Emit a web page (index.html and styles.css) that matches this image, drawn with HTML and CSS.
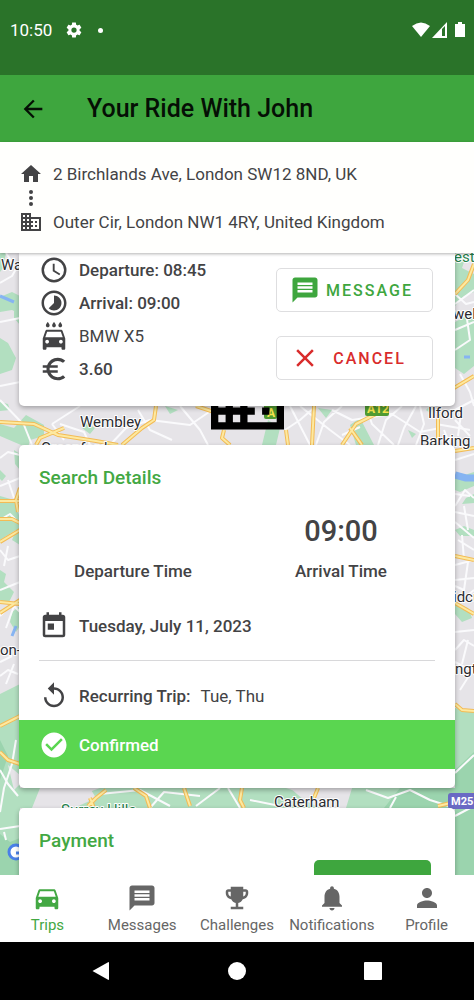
FILE: index.html
```html
<!DOCTYPE html>
<html lang="en">
<head>
    <meta charset="UTF-8">
    <meta name="viewport" content="width=device-width, initial-scale=1.0">
    <title>Your Ride With John</title>
    <link rel="stylesheet" href="styles.css">
</head>
<body>
    <div class="status">
        <span>10:50</span>
        <svg class="status-gear" viewBox="0 0 24 24"><path d="M12,15.5A3.5,3.5 0 0,1 8.5,12A3.5,3.5 0 0,1 12,8.5A3.5,3.5 0 0,1 15.5,12A3.5,3.5 0 0,1 12,15.5M19.43,12.97C19.47,12.65 19.5,12.33 19.5,12C19.5,11.67 19.47,11.34 19.43,11L21.54,9.37C21.73,9.22 21.78,8.95 21.66,8.73L19.66,5.27C19.54,5.05 19.27,4.96 19.05,5.05L16.56,6.05C16.04,5.66 15.5,5.32 14.87,5.07L14.5,2.42C14.46,2.18 14.25,2 14,2H10C9.75,2 9.54,2.18 9.5,2.42L9.13,5.07C8.5,5.32 7.96,5.66 7.44,6.05L4.95,5.05C4.73,4.96 4.46,5.05 4.34,5.27L2.34,8.73C2.21,8.95 2.27,9.22 2.46,9.37L4.57,11C4.53,11.34 4.5,11.67 4.5,12C4.5,12.33 4.53,12.65 4.57,12.97L2.46,14.63C2.27,14.78 2.21,15.05 2.34,15.27L4.34,18.73C4.46,18.95 4.73,19.03 4.95,18.95L7.44,17.94C7.96,18.34 8.5,18.68 9.13,18.93L9.5,21.58C9.54,21.82 9.75,22 10,22H14C14.25,22 14.46,21.82 14.5,21.58L14.87,18.93C15.5,18.67 16.04,18.34 16.56,17.94L19.05,18.95C19.27,19.03 19.54,18.95 19.66,18.73L21.66,15.27C21.78,15.05 21.73,14.78 21.54,14.63L19.43,12.97Z"/></svg>
        <i class="status-dot"></i>
        <svg class="status-signal" viewBox="0 0 54 16">
            <path d="M0 4Q9 -3 18 4L9 15Z"/>
            <path d="M20 16L35 0V16Z"/>
            <path class="status-cut" d="M30 7L33 4V14H30Z"/>
            <path d="M43 2H46V0H50V2H53V15H43Z"/>
        </svg>
    </div>

    <header class="appbar">
        <button class="back" type="button" aria-label="Back">
            <svg class="icon-md" viewBox="0 0 24 24"><path d="M20 11H7.83l5.59-5.59L12 4l-8 8 8 8 1.41-1.41L7.83 13H20v-2z"/></svg>
        </button>
        <h1>Your Ride With John</h1>
    </header>

    <section class="route">
        <div class="route-row">
            <svg class="icon-sm" viewBox="0 0 24 24"><path d="M10 20v-6h4v6h5v-8h3L12 3 2 12h3v8z"/></svg>
            <span>2 Birchlands Ave, London SW12 8ND, UK</span>
        </div>
        <div class="route-row">
            <svg class="icon-sm" viewBox="0 0 24 24"><circle cx="12" cy="6" r="2"/><circle cx="12" cy="12" r="2"/><circle cx="12" cy="18" r="2"/></svg>
        </div>
        <div class="route-row">
            <svg class="icon-sm" viewBox="0 0 24 24"><path d="M12 7V3H2v18h20V7H12zM6 19H4v-2h2v2zm0-4H4v-2h2v2zm0-4H4V9h2v2zm0-4H4V5h2v2zm4 12H8v-2h2v2zm0-4H8v-2h2v2zm0-4H8V9h2v2zm0-4H8V5h2v2zm10 12h-8v-2h2v-2h-2v-2h2v-2h-2V9h8v10zm-2-8h-2v2h2v-2zm0 4h-2v2h2v-2z"/></svg>
            <span>Outer Cir, London NW1 4RY, United Kingdom</span>
        </div>
    </section>

    <main class="content">
        <svg class="map" viewBox="0 253 474 622" preserveAspectRatio="xMidYMin slice">
            <rect class="land" y="253" width="474" height="622"/>
            <!-- parks -->
            <g class="park">
                <path d="M0 253H6L3 268L0 272ZM0 297L12 292L20 296V314L12 310L0 312ZM0 338L8 343L16 358L12 370L0 374ZM14 308L20 305V325L14 318ZM0 402L8 404L10 410L0 411Z"/>
                <path d="M0 424L14 428L26 415L44 425L44 436L30 440L28 448L0 436ZM85 422L95 428L90 434L82 428ZM165 406L178 410L170 414ZM0 470L6 476L2 481L0 479ZM14 450L20 454V470L15 464Z"/>
                <path d="M0 496L14 500L20 518V545L12 540L16 530L0 540ZM0 570L6 574L4 582L14 592L8 604L0 600ZM12 612L20 606V626L16 632L10 622Z"/>
                <path d="M455 253L466 256L462 268L474 274V292L464 296L455 306ZM455 322L474 312V366L464 374L455 368ZM430 406L436 410L434 416L426 410Z"/>
                <path d="M350 425L360 418L374 445H356ZM268 420L280 428L276 445H262ZM318 408L332 410L326 418ZM408 430L416 434L412 438Z"/>
                <path d="M455 478L474 472V486L460 492L455 490ZM466 498L474 494V503L462 504ZM455 530L464 526L474 530V536L460 536ZM455 604L468 608L472 618L462 622L455 614Z"/>
                <path d="M0 694L20 684V775L8 765L14 790L20 784V875H0ZM455 708L474 712V875H455Z"/>
                <path d="M20 788H40L32 808H20ZM84 794L100 788H290L304 800L320 808H70ZM352 788H455V808H340Z"/>
            </g>
            <path class="park-dark" d="M0 740L8 756L0 780ZM455 770L474 752V875H455ZM0 834L10 842L20 838V875H0ZM400 788H455V808H384Z"/>
            <path class="land" d="M58 788H90L96 798L74 808H58ZM286 788H352L346 808H322L310 796Z"/>
            <!-- water -->
            <path class="water" d="M0 296L14 302M12 636L16 626M464 357H470"/>
            <path class="water water-wide" d="M455 475L466 478H474"/>
            <!-- streets -->
            <g class="street">
                <path d="M0 283L12 276L20 262M0 322L20 318M6 253L12 262L20 266M0 386L20 382M0 400L24 425L32 445M52 424L80 406M52 424L64 440M90 445L84 432L60 424M110 445L126 428L150 420L190 425L212 410M172 440L150 430L138 410M180 406L200 430L208 445"/>
                <path d="M0 458L8 452L20 455M0 486L20 478M8 480L14 498M0 520L10 514L20 524M0 550L8 560L20 556M8 546L4 566M0 590L20 582M0 616L12 604L20 612M6 628L14 606M0 676L8 670L18 674M6 684L14 664M0 662L12 656"/>
                <path d="M285 430L300 420L316 406M290 406L310 445M300 406L330 430L350 445M316 445L324 422L342 406M332 410L352 420L392 414L420 432L440 428M342 435L360 427M378 445L386 420L402 406M398 445L404 428L416 406M366 406L372 424L394 445M420 406L424 424L416 445M436 424L470 430M444 430L450 445"/>
                <path d="M455 304L474 290M455 294L466 304L474 302M455 330L474 322M466 312L470 340L455 350M455 386L474 376M460 374L470 392L474 406M455 410L474 400M455 420L470 436M462 406L458 436"/>
                <path d="M455 460L474 454M455 506L465 490L474 498M455 494L470 496M455 512L474 516M464 506L468 530M455 522L474 538M458 540L474 550M462 535L464 560M455 565L474 560M468 562L464 590L455 586M455 580L474 578M474 590L462 600M455 650L464 640L474 646M455 662L474 672M460 690L474 668M455 632L474 630M468 640L462 664"/>
                <path d="M0 770L8 784L18 796M16 740L12 764L4 788L0 812M0 829L20 826M4 832L6 840M455 773L474 755M455 816L474 806M100 794L140 790L170 806M150 808L164 792L200 796M228 788L240 808M250 800L280 806M366 790L388 798L410 790L430 800L455 808M390 808L396 797M196 806L220 788"/>
            </g>
            <!-- main roads, wide edge first and the fill over it -->
            <g class="road-edge">
                <path d="M0 422L34 424L58 435L96 441L118 445M36 445L40 438L64 428M122 445L142 428L154 420L156 406M196 406L214 412M224 430L222 438L230 445M286 430L288 445M312 445L314 406M342 445L356 424L376 414L388 406M438 445L438 414M350 428L362 445M454 388L474 376M455 294L468 280L474 264"/>
                <path d="M0 501H20M20 488L16 500L18 512M0 519L12 519L20 523M0 542L20 530M0 613L20 600M0 602L20 604M455 556L474 560M455 603L474 614M455 451L474 448M455 704L462 710L474 711M0 726L20 716M0 752L8 760L20 764M88 806L96 798L106 790M90 798L94 808M134 788L146 796L150 808M184 788L190 806M242 788L240 800L244 808M318 788L314 798M438 806L455 802L474 794"/>
            </g>
            <g class="road">
                <path d="M0 422L34 424L58 435L96 441L118 445M36 445L40 438L64 428M122 445L142 428L154 420L156 406M196 406L214 412M224 430L222 438L230 445M286 430L288 445M312 445L314 406M342 445L356 424L376 414L388 406M438 445L438 414M350 428L362 445M454 388L474 376M455 294L468 280L474 264"/>
                <path d="M0 501H20M20 488L16 500L18 512M0 519L12 519L20 523M0 542L20 530M0 613L20 600M0 602L20 604M455 556L474 560M455 603L474 614M455 451L474 448M455 704L462 710L474 711M0 726L20 716M0 752L8 760L20 764M88 806L96 798L106 790M90 798L94 808M134 788L146 796L150 808M184 788L190 806M242 788L240 800L244 808M318 788L314 798M438 806L455 802L474 794"/>
            </g>
            <rect class="badge-a" x="264" y="400" width="13" height="19" rx="2"/>
            <text class="badge-a-text" x="267" y="417">A</text>
            <rect class="badge-a" x="365" y="400" width="24" height="16" rx="2"/>
            <text class="badge-a-text" x="367" y="413">A12</text>
            <path class="marker" transform="translate(203.7 352.8) scale(3.65)" d="M12 7V3H2v18h20V7H12zM6 19H4v-2h2v2zm0-4H4v-2h2v2zM10 19H8v-2h2v2zm0-4H8v-2h2v2zm10 4h-8v-2h2v-2h-2v-2h2v-2h-2V9h8v10zm-2-4h-2v2h2v-2z"/>
            <g class="place">
                <text x="1" y="270">Wat</text>
                <text x="80" y="427">Wembley</text>
                <text x="41" y="453">Greenford</text>
                <text x="428" y="418">Ilford</text>
                <text x="420" y="446">Barking</text>
                <text x="453" y="319">wel</text>
                <text x="453" y="602">idcu</text>
                <text x="455" y="674">ngt</text>
                <text x="0" y="655">on-</text>
                <text x="274" y="807">Caterham</text>
            </g>
            <g class="place place-park">
                <text x="454" y="262">est</text>
                <text x="61" y="815">Surrey Hills</text>
            </g>
            <rect class="badge-m" x="448" y="793" width="34" height="16" rx="3"/>
            <text class="badge-m-text" x="451" y="805">M25</text>
            <circle class="logo-ring" cx="16" cy="852" r="7"/>
            <path class="logo-bar" d="M16 853H24"/>
        </svg>

        <section class="card trip">
            <ul class="facts">
                <li>
                    <svg class="icon" viewBox="0 0 24 24"><path d="M12,20A8,8 0 0,0 20,12A8,8 0 0,0 12,4A8,8 0 0,0 4,12A8,8 0 0,0 12,20M12,2A10,10 0 0,1 22,12A10,10 0 0,1 12,22C6.47,22 2,17.5 2,12A10,10 0 0,1 12,2M12.5,7V12.25L17,14.92L16.25,16.15L11,13V7H12.5Z"/></svg>
                    <b>Departure: 08:45</b>
                </li>
                <li>
                    <svg class="icon" viewBox="0 0 24 24"><path d="M16.24 7.76C15.07 6.59 13.54 6 12 6v6l-4.24 4.24c2.34 2.34 6.14 2.34 8.49 0 2.34-2.34 2.34-6.14-.01-8.48zM12 2C6.48 2 2 6.48 2 12s4.48 10 10 10 10-4.48 10-10S17.52 2 12 2zm0 18c-4.42 0-8-3.58-8-8s3.58-8 8-8 8 3.58 8 8-3.58 8-8 8z"/></svg>
                    <b>Arrival: 09:00</b>
                </li>
                <li>
                    <svg class="icon" viewBox="0 0 24 24"><path d="M17 5c.83 0 1.5-.67 1.5-1.5 0-1-1.5-2.7-1.5-2.7s-1.5 1.7-1.5 2.7c0 .83.67 1.5 1.5 1.5zm-5 0c.83 0 1.5-.67 1.5-1.5 0-1-1.5-2.7-1.5-2.7s-1.5 1.7-1.5 2.7c0 .83.67 1.5 1.5 1.5zM7 5c.83 0 1.5-.67 1.5-1.5C8.5 2.5 7 .8 7 .8S5.5 2.5 5.5 3.5C5.5 4.33 6.17 5 7 5zM18.92 8.01C18.72 7.42 18.16 7 17.5 7h-11c-.66 0-1.21.42-1.42 1.01L3 14v8c0 .55.45 1 1 1h1c.55 0 1-.45 1-1v-1h12v1c0 .55.45 1 1 1h1c.55 0 1-.45 1-1v-8l-2.08-5.99zM6.5 18c-.83 0-1.5-.67-1.5-1.5S5.67 15 6.5 15s1.5.67 1.5 1.5S7.33 18 6.5 18zm11 0c-.83 0-1.5-.67-1.5-1.5s.67-1.5 1.5-1.5 1.5.67 1.5 1.5-.67 1.5-1.5 1.5zM5 13l1.5-4.5h11L19 13H5z"/></svg>
                    <span>BMW X5</span>
                </li>
                <li>
                    <svg class="icon" viewBox="0 0 24 24"><path d="M15 18.5c-2.51 0-4.68-1.42-5.76-3.5H15v-2H8.58c-.05-.33-.08-.66-.08-1s.03-.67.08-1H15V9H9.24C10.32 6.92 12.5 5.5 15 5.5c1.61 0 3.09.59 4.23 1.57L21 5.3C19.41 3.87 17.3 3 15 3c-3.92 0-7.24 2.51-8.48 6H3v2h3.06c-.04.33-.06.66-.06 1s.02.67.06 1H3v2h3.52c1.24 3.49 4.56 6 8.48 6 2.31 0 4.41-.87 6-2.3l-1.78-1.77c-1.13.98-2.6 1.57-4.22 1.57z"/></svg>
                    <b>3.60</b>
                </li>
            </ul>
            <div class="actions">
                <button class="action action-message" type="button">
                    <svg class="icon" viewBox="0 0 24 24"><path d="M20 2H4c-1.1 0-2 .9-2 2v18l4-4h14c1.1 0 2-.9 2-2V4c0-1.1-.9-2-2-2zm-2 12H6v-2h12v2zm0-3H6V9h12v2zm0-3H6V6h12v2z"/></svg>
                    <span>MESSAGE</span>
                </button>
                <button class="action action-cancel" type="button">
                    <svg class="icon" viewBox="0 0 24 24"><path d="M19 6.41L17.59 5 12 10.59 6.41 5 5 6.41 10.59 12 5 17.59 6.41 19 12 13.41 17.59 19 19 17.59 13.41 12z"/></svg>
                    <span>CANCEL</span>
                </button>
            </div>
        </section>

        <section class="card search">
            <h2>Search Details</h2>
            <dl class="times">
                <div>
                    <dd></dd>
                    <dt>Departure Time</dt>
                </div>
                <div>
                    <dd>09:00</dd>
                    <dt>Arrival Time</dt>
                </div>
            </dl>
            <div class="line">
                <svg class="icon" viewBox="0 0 24 24"><path d="M7,10H12V15H7M19,19H5V8H19M19,3H18V1H16V3H8V1H6V3H5C3.89,3 3,3.9 3,5V19A2,2 0 0,0 5,21H19A2,2 0 0,0 21,19V5A2,2 0 0,0 19,3Z"/></svg>
                <b>Tuesday, July 11, 2023</b>
            </div>
            <hr>
            <div class="line">
                <svg class="icon" viewBox="0 0 24 24"><path d="M12 5V1L7 6l5 5V7c3.31 0 6 2.69 6 6s-2.69 6-6 6-6-2.69-6-6H4c0 4.42 3.58 8 8 8s8-3.58 8-8-3.58-8-8-8z"/></svg>
                <b>Recurring Trip:</b>
                <span>Tue, Thu</span>
            </div>
            <div class="line confirmed">
                <svg class="icon" viewBox="0 0 24 24"><path d="M12 2C6.48 2 2 6.48 2 12s4.48 10 10 10 10-4.48 10-10S17.52 2 12 2zm-2 15l-5-5 1.41-1.41L10 14.17l7.59-7.59L19 8l-9 9z"/></svg>
                <b>Confirmed</b>
            </div>
        </section>

        <section class="card payment">
            <h2>Payment</h2>
            <button class="pay" type="button" aria-label="Pay"></button>
        </section>
    </main>

    <nav class="tabs">
        <a class="tab tab-active" href="#">
            <svg class="icon" viewBox="0 0 24 24"><path d="M18.92 6.01C18.72 5.42 18.16 5 17.5 5h-11c-.66 0-1.21.42-1.42 1.01L3 12v8c0 .55.45 1 1 1h1c.55 0 1-.45 1-1v-1h12v1c0 .55.45 1 1 1h1c.55 0 1-.45 1-1v-8l-2.08-5.99zM6.5 16c-.83 0-1.5-.67-1.5-1.5S5.67 13 6.5 13s1.5.67 1.5 1.5S7.33 16 6.5 16zm11 0c-.83 0-1.5-.67-1.5-1.5s.67-1.5 1.5-1.5 1.5.67 1.5 1.5-.67 1.5-1.5 1.5zM5 11l1.5-4.5h11L19 11H5z"/></svg>
            <span>Trips</span>
        </a>
        <a class="tab" href="#">
            <svg class="icon" viewBox="0 0 24 24"><path d="M20 2H4c-1.1 0-2 .9-2 2v18l4-4h14c1.1 0 2-.9 2-2V4c0-1.1-.9-2-2-2zm-2 12H6v-2h12v2zm0-3H6V9h12v2zm0-3H6V6h12v2z"/></svg>
            <span>Messages</span>
        </a>
        <a class="tab" href="#">
            <svg class="icon" viewBox="0 0 24 24"><path d="M19 5h-2V3H7v2H5c-1.1 0-2 .9-2 2v1c0 2.55 1.92 4.63 4.39 4.94.63 1.5 1.98 2.63 3.61 2.96V19H7v2h10v-2h-4v-3.1c1.63-.33 2.98-1.46 3.61-2.96C19.08 12.63 21 10.55 21 8V7c0-1.1-.9-2-2-2zM5 8V7h2v3.82C5.84 10.4 5 9.3 5 8zm14 0c0 1.3-.84 2.4-2 2.82V7h2v1z"/></svg>
            <span>Challenges</span>
        </a>
        <a class="tab" href="#">
            <svg class="icon" viewBox="0 0 24 24"><path d="M12 22c1.1 0 2-.9 2-2h-4c0 1.1.9 2 2 2zm6-6v-5c0-3.07-1.64-5.64-4.5-6.32V4c0-.83-.67-1.5-1.5-1.5s-1.5.67-1.5 1.5v.68C7.63 5.36 6 7.92 6 11v5l-2 2v1h16v-1l-2-2z"/></svg>
            <span>Notifications</span>
        </a>
        <a class="tab" href="#">
            <svg class="icon" viewBox="0 0 24 24"><path d="M12 12c2.21 0 4-1.79 4-4s-1.79-4-4-4-4 1.79-4 4 1.79 4 4 4zm0 2c-2.67 0-8 1.34-8 4v2h16v-2c0-2.66-5.33-4-8-4z"/></svg>
            <span>Profile</span>
        </a>
    </nav>

    <div class="system">
        <button type="button" aria-label="Back"><svg viewBox="0 0 20 20"><path d="M1.5 10L17.5 1Q18 1 18 2V18Q18 19 17.5 19Z"/></svg></button>
        <button type="button" aria-label="Home"><svg viewBox="0 0 20 20"><circle cx="10" cy="10" r="9"/></svg></button>
        <button type="button" aria-label="Recent apps"><svg viewBox="0 0 20 20"><rect x="1" y="1" width="18" height="18" rx="1"/></svg></button>
    </div>
</body>
</html>
```
FILE: styles.css
```css
* {
    box-sizing: border-box;
}
body {
    margin: 0;
    height: 100vh;
    display: flex;
    flex-direction: column;
    overflow: hidden;
    background: #fff;
    color: #434345;
    font-family: Roboto, "Liberation Sans", sans-serif;
    font-size: 17px;
    line-height: 24px;
}
h1, h2, ul, dl, dd {
    margin: 0;
    padding: 0;
}
b, dt {
    font-weight: 500;
}
svg {
    display: block;
    fill: currentColor;
}
button {
    font-family: inherit;
    cursor: pointer;
}
.icon {
    flex: none;
    width: 30px;
    height: 30px;
}
.icon-md {
    width: 28px;
    height: 28px;
}
.icon-sm {
    flex: none;
    width: 24px;
    height: 24px;
}

/* top bars */
.status {
    flex: none;
    display: flex;
    align-items: center;
    height: 75px;
    padding: 0 8px 15px 10px;
    background: #2a7329;
    color: #fff;
}
.status-gear {
    width: 18px;
    height: 18px;
    margin-left: 13px;
}
.status-dot {
    width: 5px;
    height: 5px;
    margin-left: 15px;
    border-radius: 50%;
    background: #fff;
}
.status-signal {
    width: 54px;
    height: 16px;
    margin-left: auto;
}
.status-cut {
    fill: #2a7329;
}
.appbar {
    flex: none;
    display: flex;
    align-items: center;
    gap: 40px;
    height: 67px;
    padding: 0 19px;
    background: #3ea63e;
    color: #050f05;
}
.appbar h1 {
    font-size: 25px;
    font-weight: 500;
    line-height: 32px;
}
.back {
    padding: 0;
    border: 0;
    background: none;
    color: inherit;
}
.route {
    flex: none;
    position: relative;
    z-index: 1;
    padding: 20px 19px 19px;
    background: #fffffd;
    box-shadow: 0 1px 3px rgba(0, 0, 0, 0.3);
}
.route-row {
    display: flex;
    gap: 10px;
}

/* map with the cards on it */
.content {
    flex: 1;
    min-height: 0;
    position: relative;
    overflow: hidden;
    padding: 0 19px;
}
.map {
    position: absolute;
    top: 0;
    left: 0;
    width: 100%;
    height: 100%;
}
.land {
    fill: #e6e4e8;
}
.park {
    fill: #b2dfc0;
}
.park-dark {
    fill: #9bd4ae;
}
.water,
.street,
.road,
.road-edge {
    fill: none;
    stroke-linejoin: round;
}
.water {
    stroke: #86b4f2;
    stroke-width: 3;
}
.water-wide {
    stroke-width: 7;
}
.street {
    stroke: #fafafc;
    stroke-width: 2;
}
.road-edge {
    stroke: #f3bb55;
    stroke-width: 4;
}
.road {
    stroke: #fde9a0;
    stroke-width: 2;
}
.marker {
    fill: #000;
}
.badge-a {
    fill: #4f9a32;
}
.badge-a-text {
    fill: #f6e44c;
    font-size: 12px;
    font-weight: 700;
}
.badge-m {
    fill: #6a6ac4;
}
.badge-m-text {
    fill: #fff;
    font-size: 11px;
    font-weight: 700;
}
.place {
    fill: #2b2b30;
    font-size: 15px;
    stroke: #fff;
    stroke-width: 2;
    stroke-linejoin: round;
    paint-order: stroke;
}
.place-park {
    fill: #23804a;
}
.logo-ring {
    fill: #fff;
    stroke: #4a80e8;
    stroke-width: 3;
}
.logo-bar {
    stroke: #4a80e8;
    stroke-width: 3;
}
.card {
    position: relative;
    border-radius: 5px;
    background: #fff;
    box-shadow: 0 2px 5px rgba(0, 0, 0, 0.3);
}
.card h2 {
    color: #43a843;
    font-size: 19px;
    font-weight: 500;
    line-height: 26px;
}

.trip {
    display: flex;
    justify-content: space-between;
    padding: 0 22px 21px 20px;
    border-radius: 0 0 5px 5px;
}
.facts {
    list-style: none;
}
.facts li {
    display: flex;
    align-items: center;
    gap: 10px;
    height: 33px;
}
.actions {
    display: flex;
    flex-direction: column;
    gap: 24px;
    width: 157px;
    padding-top: 15px;
}
.action {
    display: flex;
    align-items: center;
    height: 44px;
    padding: 0 13px;
    border: 1px solid #dedee0;
    border-radius: 5px;
    background: #fff;
    font-size: 16px;
    font-weight: 500;
    letter-spacing: 2px;
}
.action span {
    flex: 1;
}
.action-message {
    color: #3ea63e;
}
.action-cancel {
    color: #d92c2c;
}

.search {
    margin-top: 39px;
    padding: 20px 0 19px;
}
.search h2 {
    padding: 0 20px;
}
.times {
    display: grid;
    grid-template-columns: 1fr 1fr;
    padding: 22px 10px 19px;
    text-align: center;
}
.times dd {
    height: 36px;
    margin-bottom: 10px;
    font-size: 29px;
    font-weight: 500;
    line-height: 36px;
}
.line {
    display: flex;
    align-items: center;
    gap: 10px;
    height: 48px;
    padding: 0 20px;
}
.search hr {
    height: 1px;
    margin: 10px 20px 11px;
    border: 0;
    background: #d8d8da;
}
.confirmed {
    height: 49px;
    background: #5ad650;
    color: #fff;
}

.payment {
    margin-top: 20px;
    padding: 20px 24px 20px 20px;
}
.pay {
    display: block;
    width: 117px;
    height: 44px;
    margin: 6px 0 0 auto;
    border: 0;
    border-radius: 5px;
    background: #3ea63e;
}

/* bottom bars */
.tabs {
    flex: none;
    position: relative;
    display: grid;
    grid-template-columns: repeat(5, 1fr);
    height: 67px;
    padding-top: 8px;
    background: #fff;
}
.tab {
    display: flex;
    flex-direction: column;
    align-items: center;
    color: #666;
    font-size: 15px;
    text-decoration: none;
}
.tab-active {
    color: #43a843;
}
.system {
    flex: none;
    display: flex;
    justify-content: center;
    align-items: center;
    gap: 116px;
    height: 58px;
    background: #000;
    color: #fff;
}
.system button {
    padding: 0;
    border: 0;
    background: none;
    color: inherit;
}
.system svg {
    width: 20px;
    height: 20px;
}
```
